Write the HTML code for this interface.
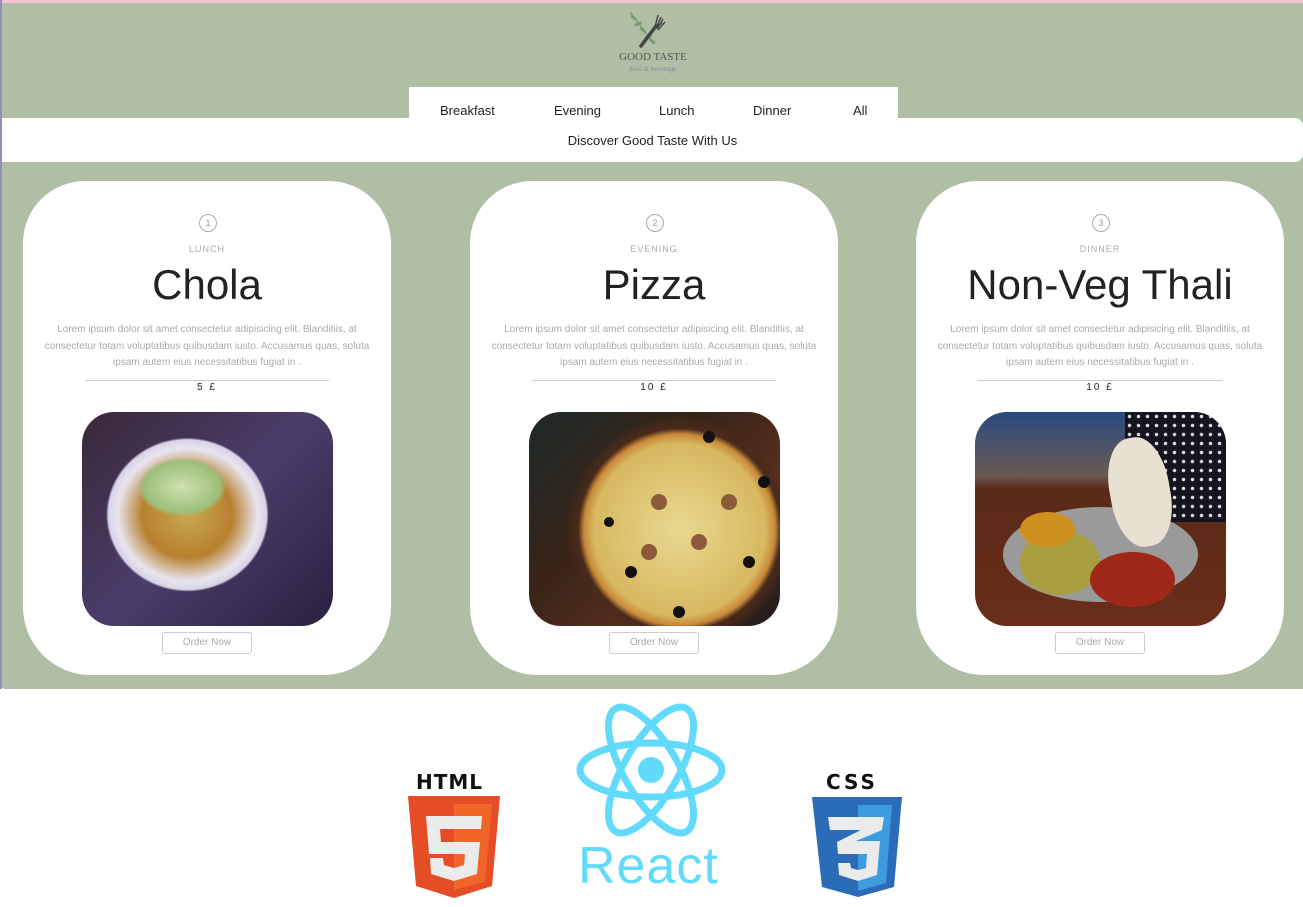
<!DOCTYPE html>
<html><head><meta charset="utf-8"><style>
*{margin:0;padding:0;box-sizing:border-box}
body{width:1303px;height:907px;background:#fff;font-family:"Liberation Sans",sans-serif;position:relative;overflow:hidden}
.top{position:absolute;left:0;top:0;width:1303px;height:689px;background:#afbea5;border-bottom-left-radius:6px}
.pk{position:absolute;left:0;top:0;width:1303px;height:3px;background:#f3c6d6}
.lf{position:absolute;left:0;top:0;width:2px;height:689px;background:#8f8fb8}
.logo{position:absolute;left:608px;top:10px;width:90px;text-align:center;color:#555}
.logo .t{font-family:"Liberation Serif",serif;font-size:11px;position:absolute;top:41px;left:0;width:90px}
.logo .s{font-family:"Liberation Serif",serif;font-style:italic;font-size:7px;position:absolute;top:55px;left:0;width:90px;color:#889}
.nav{position:absolute;left:409px;top:87px;width:489px;height:40px;background:#fff}
.nav span{position:absolute;top:16px;font-size:13px;color:#222}
.bar{position:absolute;left:2px;top:118px;width:1301px;height:44px;background:#fff;border-radius:0 8px 8px 0;text-align:center;font-size:13px;color:#222;line-height:46px}
.card{position:absolute;top:181px;width:368px;height:494px;background:#fff;border-radius:62px 62px 68px 68px}
.num{position:absolute;left:176px;top:33px;width:18px;height:18px;border:1px solid #aaa;border-radius:50%;font-size:9px;color:#999;text-align:center;line-height:16px}
.cat{position:absolute;top:63px;width:100%;text-align:center;font-size:9px;letter-spacing:1px;color:#aaa}
.ttl{position:absolute;top:80px;width:100%;text-align:center;font-size:42px;color:#222;font-weight:normal}
.desc{position:absolute;top:141px;left:20px;width:328px;text-align:center;font-size:10px;line-height:16.5px;color:#aaa}
.line{position:absolute;top:199px;left:62px;width:244px;border-top:1px solid #c7ccd8}
.price{position:absolute;top:201px;width:100%;text-align:center;font-size:10px;letter-spacing:2px;color:#222}
.img{position:absolute;left:59px;top:231px;width:251px;height:214px;border-radius:32px;overflow:hidden}
.btn{position:absolute;left:139px;top:451px;width:90px;height:22px;border:1px solid #ccc;border-radius:3px;font-size:10px;color:#aaa;text-align:center;line-height:20px}
</style></head><body>
<div class="top">
<div class="logo">
<svg width="90" height="42" viewBox="0 0 90 42"><path d="M22 2 L46 34" stroke="#7fa27a" stroke-width="1.5"/><g fill="#6f9a6a"><ellipse cx="26" cy="8" rx="4" ry="1.5" transform="rotate(40 26 8)"/><ellipse cx="30" cy="14" rx="4" ry="1.5" transform="rotate(-20 30 14)"/><ellipse cx="35" cy="20" rx="4" ry="1.5" transform="rotate(40 35 20)"/><ellipse cx="40" cy="27" rx="4" ry="1.5" transform="rotate(-20 40 27)"/><ellipse cx="44" cy="31" rx="4" ry="1.5" transform="rotate(40 44 31)"/></g><path d="M33 36 L48 16" stroke="#444" stroke-width="3.5" stroke-linecap="round"/><path d="M47 17 L50 5 M48 18 L53 7 M49 19 L55 9 M50 20 L57 12 M47 17 L54 13" stroke="#444" stroke-width="1.4"/></svg>
<div class="t">GOOD TASTE</div><div class="s">food &amp; beverage</div>
</div>
<div class="nav"><span style="left:31px">Breakfast</span><span style="left:145px">Evening</span><span style="left:250px">Lunch</span><span style="left:344px">Dinner</span><span style="left:444px">All</span></div>
<div class="bar">Discover Good Taste With Us</div>
<div class="pk"></div><div class="lf"></div>
</div>

<div class="card" style="left:23px">
<div class="num">1</div><div class="cat">LUNCH</div><div class="ttl">Chola</div>
<div class="desc">Lorem ipsum dolor sit amet consectetur adipisicing elit. Blanditiis, at consectetur totam voluptatibus quibusdam iusto. Accusamus quas, soluta ipsam autem eius necessitatibus fugiat in .</div>
<div class="line"></div><div class="price">5 £</div>
<div class="img" style="background:radial-gradient(ellipse 45% 50% at 42% 48%,#c8a850 0,#b88030 40%,#e8e4ee 62%,#d8d4e8 70%,transparent 72%),linear-gradient(135deg,#3a2838,#4a3d6a 50%,#2a2040)">
<div style="position:absolute;left:55px;top:45px;width:90px;height:60px;border-radius:50%;background:radial-gradient(#cfe0b0,#9cbf78 60%,transparent 70%)"></div></div>
<div class="btn">Order Now</div>
</div>

<div class="card" style="left:470px">
<div class="num">2</div><div class="cat">EVENING</div><div class="ttl">Pizza</div>
<div class="desc">Lorem ipsum dolor sit amet consectetur adipisicing elit. Blanditiis, at consectetur totam voluptatibus quibusdam iusto. Accusamus quas, soluta ipsam autem eius necessitatibus fugiat in .</div>
<div class="line"></div><div class="price">10 £</div>
<div class="img" style="background:radial-gradient(circle at 60% 55%,#e8d890 0,#d8b860 45%,#c88838 50%,#4a2a1a 53%,transparent 60%),linear-gradient(135deg,#1c2a28,#3a2418 40%,#5a3020 70%,#1a1a1a)">
<svg width="251" height="214" style="position:absolute;left:0;top:0"><g fill="#111"><circle cx="180" cy="25" r="6"/><circle cx="102" cy="160" r="6"/><circle cx="150" cy="200" r="6"/><circle cx="235" cy="70" r="6"/><circle cx="220" cy="150" r="6"/><circle cx="80" cy="110" r="5"/></g><g fill="#8a5a3a"><circle cx="130" cy="90" r="8"/><circle cx="170" cy="130" r="8"/><circle cx="200" cy="90" r="8"/><circle cx="120" cy="140" r="8"/></g></svg></div>
<div class="btn">Order Now</div>
</div>

<div class="card" style="left:916px">
<div class="num">3</div><div class="cat">DINNER</div><div class="ttl">Non-Veg Thali</div>
<div class="desc">Lorem ipsum dolor sit amet consectetur adipisicing elit. Blanditiis, at consectetur totam voluptatibus quibusdam iusto. Accusamus quas, soluta ipsam autem eius necessitatibus fugiat in .</div>
<div class="line"></div><div class="price">10 £</div>
<div class="img" style="background:linear-gradient(180deg,#2a4a80 0,#6a5a50 30%,#5a2a18 36%,#6a2e1a 100%)">
<div style="position:absolute;left:150px;top:0;width:101px;height:110px;background:radial-gradient(#ddd 1.5px,#151520 2px) 0 0/9px 9px"></div>
<div style="position:absolute;left:28px;top:95px;width:195px;height:95px;border-radius:50%;background:#9a9a9a"></div>
<div style="position:absolute;left:45px;top:118px;width:80px;height:65px;border-radius:50%;background:#a8a040"></div>
<div style="position:absolute;left:115px;top:140px;width:85px;height:55px;border-radius:50%;background:#a02818"></div>
<div style="position:absolute;left:45px;top:100px;width:55px;height:35px;border-radius:50%;background:#d09020"></div>
<div style="position:absolute;left:135px;top:25px;width:60px;height:110px;border-radius:45%;background:#e8e0d0;transform:rotate(-10deg)"></div>
</div>
<div class="btn">Order Now</div>
</div>

<div style="position:absolute;left:416px;top:770px;font-family:'DejaVu Sans',sans-serif;font-weight:bold;font-size:20px;color:#111;letter-spacing:1px">HTML</div>
<svg style="position:absolute;left:408px;top:796px" width="92" height="102" viewBox="0 0 92 102"><path d="M0 0H92L84 90 46 102 8 90Z" fill="#e44d26"/><path d="M46 8H84L77 86 46 94Z" fill="#f16529"/><path d="M18 20H74L73 33H32L33 46H72L69 78 46 85 23 78 22 62H35L36 69 46 72 56 69 57 58H21Z" fill="#ebebeb"/></svg>
<svg style="position:absolute;left:575px;top:702px" width="152" height="140" viewBox="0 0 152 140"><g fill="none" stroke="#61dafb" stroke-width="7"><ellipse cx="76" cy="68" rx="71" ry="27"/><ellipse cx="76" cy="68" rx="71" ry="27" transform="rotate(60 76 68)"/><ellipse cx="76" cy="68" rx="71" ry="27" transform="rotate(120 76 68)"/></g><circle cx="76" cy="68" r="13" fill="#61dafb"/></svg>
<div style="position:absolute;left:578px;top:836px;font-size:52px;color:#61dafb;line-height:60px;letter-spacing:1px">React</div>
<div style="position:absolute;left:826px;top:770px;font-family:'DejaVu Sans',sans-serif;font-weight:bold;font-size:20px;color:#111;letter-spacing:3px">CSS</div>
<svg style="position:absolute;left:812px;top:797px" width="92" height="102" viewBox="0 0 92 102"><path d="M0 0H90L82 90 46 100 10 90Z" fill="#2a6cb8"/><path d="M46 8H80L74 86 46 94Z" fill="#3d9be0"/><path d="M16 20H72L70 33 44 44H68L65 78 46 84 27 78 26 66H38L39 71 46 73 54 71 55 57H26L25 45 49 33H18Z" fill="#ebebeb"/></svg>
</body></html>
